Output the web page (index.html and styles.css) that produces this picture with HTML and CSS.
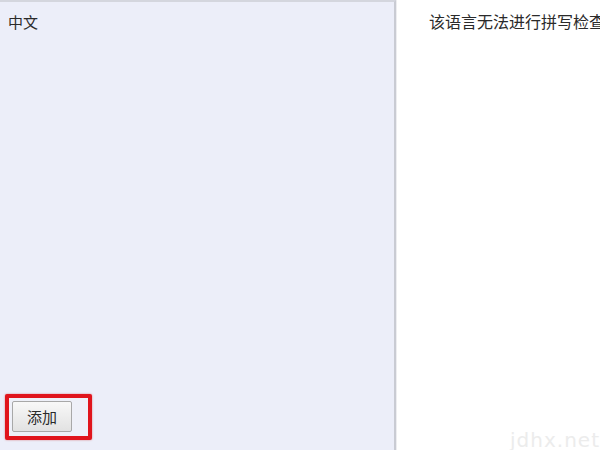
FILE: index.html
```html
<!DOCTYPE html>
<html lang="zh-CN">
<head>
    <meta charset="UTF-8">
    <meta name="viewport" content="width=device-width, initial-scale=1.0">
    <title>拼写检查</title>
    <link rel="stylesheet" href="styles.css">
</head>
<body>
    <div class="dialog">
        <div class="lang-list">
            <div class="lang-item">中文</div>
            <div class="actions">
                <div class="highlight">
                    <button class="add-btn">添加</button>
                </div>
            </div>
        </div>
        <div class="lang-info">
            <div class="info-text">该语言无法进行拼写检查</div>
            <div class="watermark">jdhx.net</div>
        </div>
    </div>
</body>
</html>
```

FILE: styles.css
```css
html, body {
    margin: 0;
    height: 100%;
    overflow: hidden;
}

body {
    font-family: "Noto Sans CJK SC", "Liberation Sans", sans-serif;
    background: #fff;
}

.dialog {
    display: flex;
    height: 450px;
    width: 600px;
}

.lang-list {
    width: 396px;
    flex-shrink: 0;
    background: #eceef9;
    border-top: 2px solid #d4d6de;
    border-right: 2px solid #c9cbd3;
    display: flex;
    flex-direction: column;
    box-sizing: border-box;
}

.lang-item {
    font-size: 15px;
    color: #2a2a2a;
    padding: 9px 8px 0 8px;
    line-height: 22px;
}

.actions {
    margin-top: auto;
    padding: 0 0 10px 5px;
}

.highlight {
    display: inline-flex;
    width: 76px;
    height: 35px;
    border: 4px solid #e0141c;
    border-radius: 2px;
    padding: 3px 0 0 3px;
    box-sizing: content-box;
    background: #eef0f8;
    box-shadow: 0 0 2px rgba(200, 0, 0, 0.5);
}

.add-btn {
    width: 60px;
    height: 31px;
    font-family: "Noto Sans CJK SC", sans-serif;
    font-size: 15px;
    color: #2a2a2a;
    background: linear-gradient(#f8f8f8, #e2e2e2);
    border: 1px solid #a8a8a8;
    border-radius: 2px;
    padding: 0;
}

.lang-info {
    flex: 1;
    position: relative;
    border-left: 1px solid #ededf0;
    overflow: hidden;
}

.info-text {
    font-size: 16px;
    color: #2a2a2a;
    white-space: nowrap;
    padding: 10px 0 0 32px;
    line-height: 22px;
}

.watermark {
    position: absolute;
    right: 0;
    bottom: 0;
    font-family: "DejaVu Sans", sans-serif;
    font-size: 20px;
    line-height: 20px;
    color: #ececec;
    letter-spacing: 1px;
}
```
